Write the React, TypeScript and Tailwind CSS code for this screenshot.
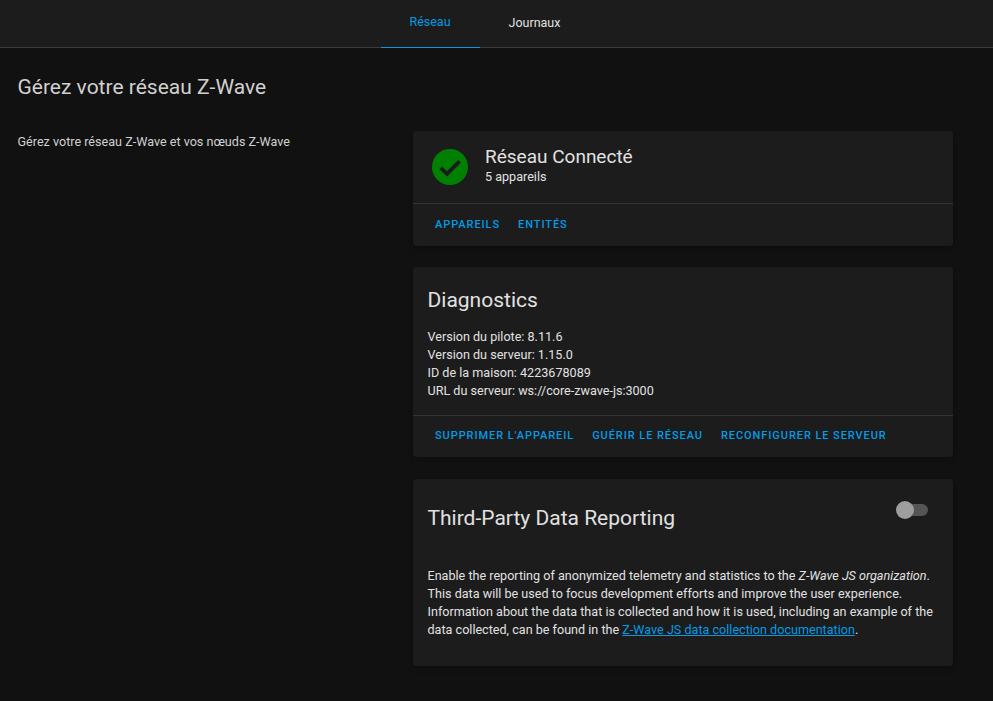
const buttonClass =
  "h-9 px-2 text-[11px] font-medium tracking-[0.93px] uppercase text-[#039be5] flex items-center";

function Card({ children }: { children: React.ReactNode }) {
  return <div className="bg-[#1c1c1c] rounded shadow-md">{children}</div>;
}

function CardActions({ labels, height }: { labels: string[]; height: string }) {
  return (
    <div className={`border-t border-[#333333] ${height} px-[14px] flex items-center gap-[2px]`}>
      {labels.map((label) => (
        <span key={label} className={buttonClass}>
          {label}
        </span>
      ))}
    </div>
  );
}

export default function App() {
  return (
    <div
      className="w-[993px] h-[701px] overflow-hidden bg-[#111111] text-[#e1e1e1]"
      style={{ fontFamily: "Roboto, sans-serif" }}
    >
      <div className="h-12 bg-[#1c1c1c] border-b border-[#3a3a3a] flex justify-center pr-[23px]">
        <div className="w-[99px] h-12 border-b-[1px] border-[#039be5] flex justify-center pt-[13px] text-[12.5px] text-[#039be5]">
          Réseau
        </div>
        <div className="w-[110px] h-12 flex justify-center pt-[14px] text-[12.5px] text-[#e1e1e1]">
          Journaux
        </div>
      </div>

      <div className="pl-[17.5px] pr-[39.5px] pt-[25px]">
        <h1 className="text-[21px] leading-[28px] text-[#d0d0d0]">Gérez votre réseau Z-Wave</h1>
        <div className="flex mt-[30px]">
          <p className="w-[395.5px] text-[12.6px] leading-5 pt-[1px] text-[#d0d0d0]">
            Gérez votre réseau Z-Wave et vos nœuds Z-Wave
          </p>
          <div className="w-[540px] flex flex-col">
            <Card>
              <div className="h-[72px] flex items-center pl-[19px]">
                <svg viewBox="0 0 24 24" className="w-[36px] h-[36px] mr-[17px]">
                  <circle cx="12" cy="12" r="12" fill="#008000" />
                  <path d="M5.8 12.6 L10 16.6 L18.4 8.2" fill="none" stroke="#1c1c1c" strokeWidth="2.6" />
                </svg>
                <div className="-mt-[2px]">
                  <div className="text-[19px] leading-[22px]">Réseau Connecté</div>
                  <div className="text-[12.6px] leading-[18px]">5 appareils</div>
                </div>
              </div>
              <CardActions labels={["Appareils", "Entités"]} height="h-[43px]" />
            </Card>

            <div className="mt-[21px]">
              <Card>
                <div className="h-[148px] px-[14.5px] pt-[18px]">
                  <h2 className="text-[21px] leading-[30px]">Diagnostics</h2>
                  <div className="mt-[13px] text-[12.6px] leading-[18px]">
                    <div>Version du pilote: 8.11.6</div>
                    <div>Version du serveur: 1.15.0</div>
                    <div>ID de la maison: 4223678089</div>
                    <div>URL du serveur: ws://core-zwave-js:3000</div>
                  </div>
                </div>
                <CardActions
                  labels={["Supprimer l'appareil", "Guérir le réseau", "Reconfigurer le serveur"]}
                  height="h-[42px]"
                />
              </Card>
            </div>

            <div className="mt-[22px]">
              <Card>
                <div className="h-[187px] px-[14.5px] pt-[22px]">
                  <div className="flex items-start justify-between">
                    <h2 className="text-[21px] leading-[34px]">Third-Party Data Reporting</h2>
                    <div className="flex items-center mr-[11px]">
                      <div className="w-[18px] h-[18px] rounded-full bg-[#9e9e9e] relative z-10" />
                      <div className="w-[16px] h-3 rounded-r-full bg-[#555555] -ml-[2px]" />
                    </div>
                  </div>
                  <p className="mt-[32px] text-[12.6px] leading-[18px]">
                    Enable the reporting of anonymized telemetry and statistics to the <em>Z-Wave JS organization</em>.
                    This data will be used to focus development efforts and improve the user experience.
                    Information about the data that is collected and how it is used, including an example of the
                    data collected, can be found in the <a className="text-[#039be5] underline">Z-Wave JS data collection documentation</a>.
                  </p>
                </div>
              </Card>
            </div>
          </div>
        </div>
      </div>
    </div>
  );
}
